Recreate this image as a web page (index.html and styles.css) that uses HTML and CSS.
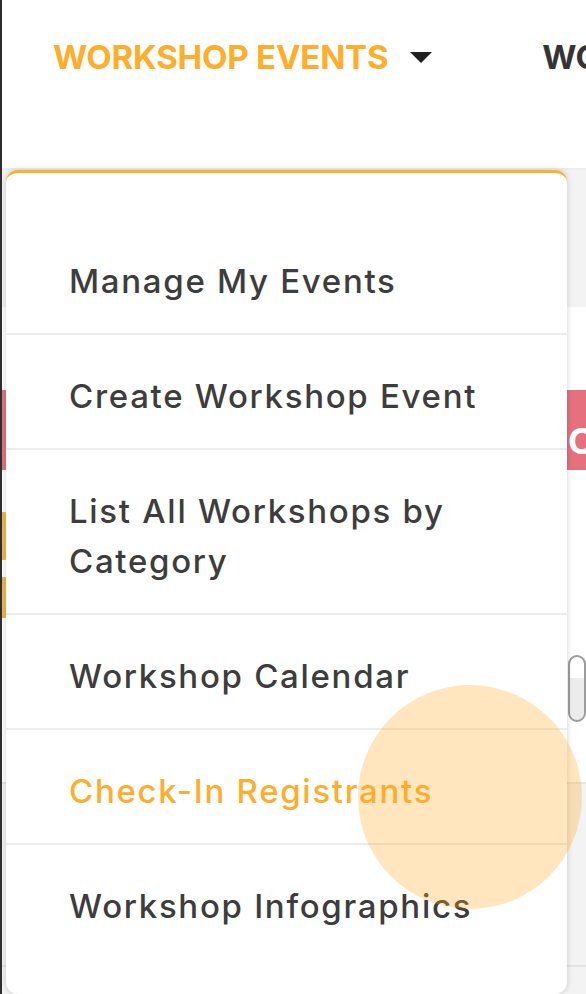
FILE: index.html
```html
<!DOCTYPE html>
<html lang="en">
<head>
<meta charset="utf-8">
<title>Workshop Events</title>
<link rel="stylesheet" href="styles.css">
</head>
<body>
<div class="page">
  <header class="topbar">
    <nav class="nav">
      <div class="nav-item active">WORKSHOP EVENTS<span class="caret"></span></div>
      <div class="nav-item">WORKSHOPS</div>
    </nav>
  </header>

  <main class="content">
    <section class="band-grey"></section>
    <section class="band-white"></section>
    <section class="band-pink"><span class="pink-text">Complete</span></section>
    <section class="band-gap">
      <span class="side-tab"></span>
      <span class="side-tab short"></span>
    </section>
    <section class="btn-row"><span class="ghost-btn"></span></section>
    <section class="band-gap2"></section>
    <section class="band-grey2"><div class="grey-line"></div></section>
  </main>

  <div class="dropdown">
    <ul class="menu">
      <li class="menu-item">Manage My Events</li>
      <li class="menu-item">Create Workshop Event</li>
      <li class="menu-item">List All Workshops by Category</li>
      <li class="menu-item">Workshop Calendar</li>
      <li class="menu-item active">Check-In Registrants</li>
      <li class="menu-item">Workshop Infographics</li>
    </ul>
    <span class="ripple"></span>
  </div>
</div>
</body>
</html>
```

FILE: styles.css
```css
* { box-sizing: border-box; margin: 0; padding: 0; }

html, body {
  width: 586px;
  height: 994px;
  overflow: hidden;
}

body {
  font-family: Inter, "Noto Sans", "Liberation Sans", sans-serif;
  background: #ffffff;
}

.page {
  position: relative;
  height: 994px;
  border-left: 2px solid #2e2e2e;
  overflow: hidden;
  display: flex;
  flex-direction: column;
}

/* ---------- top bar ---------- */
.topbar {
  height: 170px;
  flex: none;
  background: #ffffff;
  border-bottom: 2px solid #ededed;
}

.nav {
  height: 114px;
  display: flex;
  align-items: center;
  padding-left: 51px;
  gap: 110px;
  white-space: nowrap;
}

.nav-item {
  display: flex;
  align-items: center;
  font-size: 33px;
  font-weight: 700;
  letter-spacing: -0.2px;
  color: #343434;
}

.nav-item.active {
  color: #ffae2b;
}

.caret {
  width: 0;
  height: 0;
  margin-left: 22px;
  border-left: 11px solid transparent;
  border-right: 11px solid transparent;
  border-top: 11px solid #1f1f1f;
}

/* ---------- background page ---------- */
.content {
  flex: 1;
  display: flex;
  flex-direction: column;
}

.band-grey { height: 137px; background: #f3f3f4; }
.band-white { height: 83px; background: #ffffff; }

.band-pink {
  height: 80px;
  background: #e5717f;
  padding-left: 566px;
  display: flex;
  align-items: center;
  padding-top: 22px;
  white-space: nowrap;
}

.pink-text {
  color: #ffffff;
  font-size: 36px;
  font-weight: 700;
}

.band-gap {
  height: 185px;
  background: #ffffff;
  padding-top: 42px;
  display: flex;
  flex-direction: column;
  gap: 17px;
}

.side-tab {
  display: block;
  width: 6px;
  height: 48px;
  background: #f1b64d;
  border-radius: 0 4px 4px 0;
}

.side-tab.short {
  height: 41px;
}

.btn-row {
  height: 67px;
  padding-left: 566px;
  display: flex;
}

.ghost-btn {
  display: block;
  width: 120px;
  height: 67px;
  border: 2px solid #9c9c9c;
  border-radius: 10px;
  background: linear-gradient(#ffffff 0 34%, #ececec 34% 100%);
}

.band-gap2 {
  height: 62px;
  background: #ffffff;
  border-bottom: 2px solid #e6e6e6;
}

.band-grey2 {
  flex: 1;
  background: #f3f3f3;
  padding-top: 181px;
}

.grey-line {
  height: 2px;
  background: #e3e3e3;
}

/* ---------- dropdown overlay ---------- */
.dropdown {
  position: absolute;
  left: 4px;
  top: 170px;
  width: 561px;
  height: 824px;
  background: #ffffff;
  border-top: 3px solid #ffae2e;
  border-radius: 12px;
  box-shadow: 0 0 6px rgba(0, 0, 0, 0.18);
}

.menu {
  list-style: none;
  padding-top: 47px;
}

.menu-item {
  padding: 36px 63px 27px;
  line-height: 50px;
  font-size: 33px;
  font-weight: 500;
  letter-spacing: 1.7px;
  color: #3d3d3d;
  border-bottom: 2px solid #ececec;
}

.menu-item:last-child {
  border-bottom: none;
}

.menu-item.active {
  color: #ffad2c;
}

.ripple {
  position: absolute;
  left: 352px;
  top: 512px;
  width: 224px;
  height: 224px;
  border-radius: 50%;
  background: rgba(255, 172, 40, 0.3);
}
```
